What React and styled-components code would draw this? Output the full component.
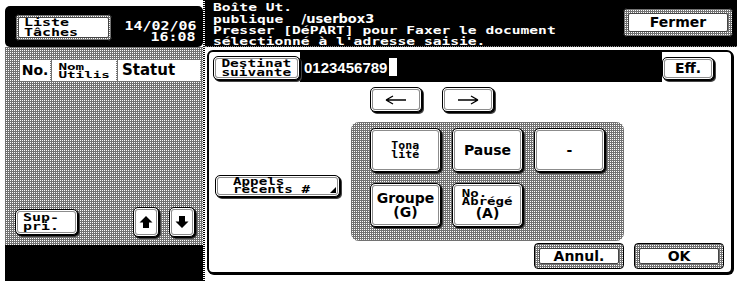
import React from 'react';
import styled, { createGlobalStyle, css } from 'styled-components';

const Global = createGlobalStyle`
  html, body { margin: 0; padding: 0; background: #fff; }
  body { width: 737px; height: 281px; overflow: hidden; }
  * { box-sizing: border-box; }
`;

const mono = css`
  font-family: "DejaVu Sans Mono", "Liberation Mono", monospace;
  font-weight: bold;
`;
const sans = css`
  font-family: "DejaVu Sans", "Liberation Sans", sans-serif;
  font-weight: bold;
`;
const halftone = css`
  background-color: #fff;
  background-image:
    linear-gradient(90deg, #727272 1px, transparent 1px),
    linear-gradient(#727272 1px, transparent 1px);
  background-size: 2px 2px;
`;

const Screen = styled.div`
  width: 737px;
  height: 281px;
  display: flex;
  background: #fff;
  color: #000;
`;

/* ---------- text ---------- */
const MonoText = styled.div`
  ${mono};
  font-size: ${p => p.$size || 11}px;
  line-height: ${p => p.$lh || 10}px;
  text-align: ${p => p.$align || 'left'};
  white-space: pre;
  transform: scaleX(${p => p.$sx || 1});
  transform-origin: ${p => p.$origin || 'center'} center;
`;
const SansText = styled.div`
  ${sans};
  font-size: ${p => p.$size || 14}px;
  line-height: ${p => p.$lh || 15}px;
  text-align: center;
  white-space: pre;
`;

/* ---------- left job list ---------- */
const LeftPanel = styled.div`
  width: 198px;
  margin-left: 5px;
  display: flex;
  flex-direction: column;
`;
const JobBox = styled.div`
  margin-top: 6px;
  height: 41px;
  background: #000;
  border-radius: 5px;
  display: flex;
  align-items: flex-start;
  justify-content: space-between;
  padding: 8px 7px 0 10px;
`;
const FrameOuter = styled.div`
  ${halftone};
  padding: ${p => p.$ring || 3}px;
  border: 1px solid #000;
  border-radius: 4px;
  width: ${p => p.$w}px;
  height: ${p => p.$h}px;
  display: flex;
  color: #000;
`;
const FrameInner = styled.div`
  flex: 1;
  background: #fff;
  border: 1px solid #444;
  border-radius: 2px;
  display: flex;
  align-items: center;
  justify-content: ${p => (p.$left ? 'flex-start' : 'center')};
  padding-left: ${p => p.$pl || 0}px;
`;
const DateTime = styled.div`
  color: #fff;
  margin-top: 7px;
  display: flex;
  flex-direction: column;
  align-items: flex-end;
  gap: 1px;
`;
const JobArea = styled.div`
  ${halftone};
  flex: 1;
  display: flex;
  flex-direction: column;
  padding: 13px 0 8px 0;
`;
const ColumnHeads = styled.div`
  display: flex;
  gap: 2px;
  padding-left: 15px;
`;
const HeadCell = styled.div`
  width: ${p => p.$w}px;
  height: 21px;
  background: #fff;
  display: flex;
  align-items: center;
  justify-content: ${p => (p.$left ? 'flex-start' : 'center')};
  padding-left: ${p => p.$pl || 0}px;
`;
const JobFooter = styled.div`
  margin-top: auto;
  display: flex;
  align-items: center;
  justify-content: space-between;
  padding: 0 8px 0 10px;
`;
const ScrollKeys = styled.div`
  display: flex;
  gap: 10px;
`;
const StatusBar = styled.div`
  height: 36px;
  background: #000;
`;
const Divider = styled.div`
  width: 2px;
  background-image: repeating-linear-gradient(#000 0 1px, #fff 1px 2px);
`;

/* ---------- keys ---------- */
const Key = styled.div`
  position: relative;
  width: ${p => p.$w}px;
  height: ${p => p.$h}px;
  background: #fff;
  color: #000;
  border: 1px solid #000;
  border-radius: 5px;
  box-shadow: inset 0 0 0 1px #fff, inset 0 0 0 2px #8c8c8c, 1px 1px 0 #000, 2px 2px 0 #444;
  display: flex;
  align-items: center;
  justify-content: ${p => (p.$left ? 'flex-start' : 'center')};
  padding-left: ${p => p.$pl || 0}px;
  flex: none;
`;
const CornerMark = styled.span`
  position: absolute;
  right: 3px;
  bottom: 3px;
  width: 0;
  height: 0;
  border-left: 6px solid transparent;
  border-bottom: 6px solid #000;
`;

/* ---------- main area ---------- */
const Main = styled.div`
  flex: 1;
  display: flex;
  flex-direction: column;
`;
const MessageBar = styled.div`
  height: 47px;
  background: #000;
  color: #fff;
  display: flex;
  justify-content: space-between;
  align-items: flex-start;
  padding: 2px 4px 0 8px;
  border-bottom: 1px dotted #888;
`;
const MessageLines = styled.div`
  display: flex;
  flex-direction: column;
`;
const MessageLine = styled.div`
  display: flex;
  align-items: baseline;
  height: 11.4px;
`;
const BoxName = styled.span`
  ${sans};
  font-size: 13px;
  line-height: 11px;
  margin-left: 38px;
`;
const FermerWrap = styled.div`
  margin-top: 6px;
`;
const Dialog = styled.div`
  margin: 3px 4px 7px 2px;
  flex: 1;
  border: 2px solid #000;
  border-radius: 6px;
  box-shadow: 1px 1px 0 #000;
  background: #fff;
  display: flex;
  flex-direction: column;
  overflow: hidden;
`;
const TopRow = styled.div`
  height: 30px;
  display: flex;
  align-items: flex-start;
`;
const DestWrap = styled.div`
  margin: 4px 0 0 4px;
`;
const AddressField = styled.div`
  flex: 1;
  height: 30px;
  background: #000;
  color: #fff;
  display: flex;
  align-items: center;
  padding-left: 4px;
  font-family: "Liberation Sans", Arial, sans-serif;
  font-weight: bold;
  font-size: 15px;
`;
const Cursor = styled.span`
  width: 8px;
  height: 18px;
  background: #fff;
  margin-left: 2px;
`;
const EffWrap = styled.div`
  margin: 5px 17px 0 0;
`;
const ArrowRow = styled.div`
  margin-top: 5px;
  padding-left: 161px;
  display: flex;
  gap: 20px;
`;
const MidRow = styled.div`
  margin-top: 10px;
  display: flex;
  align-items: center;
`;
const AppelsWrap = styled.div`
  margin: 8px 0 0 6px;
`;
const Keypad = styled.div`
  ${halftone};
  margin-left: 11px;
  width: 273px;
  height: 119px;
  border-radius: 8px;
  padding: 6px 0 0 19px;
  display: grid;
  grid-template-columns: repeat(3, 71px);
  grid-auto-rows: 44px;
  gap: 11px;
`;
const BottomRow = styled.div`
  margin-top: 2px;
  display: flex;
  justify-content: flex-end;
  gap: 10px;
  padding-right: 7px;
`;

const LeftArrow = () => (
  <svg width="22" height="10" viewBox="0 0 22 10">
    <path d="M1 5H21M1 5L8 1M1 5L8 9" stroke="#000" strokeWidth="1.4" fill="none" />
  </svg>
);
const RightArrow = () => (
  <svg width="22" height="10" viewBox="0 0 22 10">
    <path d="M1 5H21M21 5L14 1M21 5L14 9" stroke="#000" strokeWidth="1.4" fill="none" />
  </svg>
);
const UpIcon = () => (
  <svg width="14" height="14" viewBox="0 0 14 14">
    <path d="M7 1L13.5 7.5H10V13H4V7.5H0.5Z" fill="#000" />
  </svg>
);
const DownIcon = () => (
  <svg width="14" height="14" viewBox="0 0 14 14">
    <path d="M7 13L13.5 6.5H10V1H4V6.5H0.5Z" fill="#000" />
  </svg>
);

const msg = { $size: 10.5, $lh: 11, $sx: 1.39, $origin: 'left' };

export default function App() {
  return (
    <>
      <Global />
      <Screen>
        <LeftPanel>
          <JobBox>
            <FrameOuter $w={97} $h={27} $ring={2}>
              <FrameInner $left $pl={5}>
                <MonoText $size={11} $lh={9.5} $sx={1.36} $origin="left">{'Liste\nTâches'}</MonoText>
              </FrameInner>
            </FrameOuter>
            <DateTime>
              <MonoText $size={11.5} $lh={10} $sx={1.3} $origin="right">14/02/06</MonoText>
              <MonoText $size={11.5} $lh={10} $sx={1.3} $origin="right">16:08</MonoText>
            </DateTime>
          </JobBox>
          <JobArea>
            <ColumnHeads>
              <HeadCell $w={30}><SansText $size={14}>No.</SansText></HeadCell>
              <HeadCell $w={64}><MonoText $size={9.5} $lh={8} $sx={1.5}>{'Nom\nUtilis'}</MonoText></HeadCell>
              <HeadCell $w={82} $left $pl={4}><SansText $size={15}>Statut</SansText></HeadCell>
            </ColumnHeads>
            <JobFooter>
              <Key $w={63} $h={26} $left $pl={7}>
                <MonoText $size={11} $lh={9} $sx={1.36} $origin="left">{'Sup-\npri.'}</MonoText>
              </Key>
              <ScrollKeys>
                <Key $w={26} $h={30}><UpIcon /></Key>
                <Key $w={26} $h={30}><DownIcon /></Key>
              </ScrollKeys>
            </JobFooter>
          </JobArea>
          <StatusBar />
        </LeftPanel>
        <Divider />
        <Main>
          <MessageBar>
            <MessageLines>
              <MessageLine><MonoText {...msg}>Boîte Ut.</MonoText></MessageLine>
              <MessageLine>
                <MonoText {...msg}>publique</MonoText>
                <BoxName>/userbox3</BoxName>
              </MessageLine>
              <MessageLine><MonoText {...msg}>Presser [DéPART] pour Faxer le document</MonoText></MessageLine>
              <MessageLine><MonoText {...msg}>sélectionné à l'adresse saisie.</MonoText></MessageLine>
            </MessageLines>
            <FermerWrap>
              <FrameOuter $w={110} $h={29} $ring={4}>
                <FrameInner><SansText $size={14}>Fermer</SansText></FrameInner>
              </FrameOuter>
            </FermerWrap>
          </MessageBar>
          <Dialog>
            <TopRow>
              <DestWrap>
                <Key $w={87} $h={24}>
                  <MonoText $size={10.5} $lh={9} $sx={1.38}>{'Destinat\nsuivante'}</MonoText>
                </Key>
              </DestWrap>
              <AddressField>
                0123456789<Cursor />
              </AddressField>
              <EffWrap>
                <Key $w={52} $h={23}><SansText $size={14}>Eff.</SansText></Key>
              </EffWrap>
            </TopRow>
            <ArrowRow>
              <Key $w={52} $h={25}><LeftArrow /></Key>
              <Key $w={52} $h={25}><RightArrow /></Key>
            </ArrowRow>
            <MidRow>
              <AppelsWrap>
                <Key $w={125} $h={22} $left $pl={17}>
                  <MonoText $size={10} $lh={8} $sx={1.42} $origin="left">{'Appels\nrécents #'}</MonoText>
                  <CornerMark />
                </Key>
              </AppelsWrap>
              <Keypad>
                <Key $w={71} $h={44}><MonoText $size={11} $lh={9} $sx={1.05}>{'Tona\nlité'}</MonoText></Key>
                <Key $w={71} $h={44}><SansText $size={14}>Pause</SansText></Key>
                <Key $w={71} $h={44}><SansText $size={14}>-</SansText></Key>
                <Key $w={71} $h={44}><SansText $size={14} $lh={14}>{'Groupe\n(G)'}</SansText></Key>
                <Key $w={71} $h={44}>
                  <div>
                    <MonoText $size={10} $lh={8} $sx={1.4}>{'No.\nAbrégé'}</MonoText>
                    <SansText $size={14} $lh={15}>(A)</SansText>
                  </div>
                </Key>
              </Keypad>
            </MidRow>
            <BottomRow>
              <FrameOuter $w={90} $h={26} $ring={4}>
                <FrameInner><SansText $size={14}>Annul.</SansText></FrameInner>
              </FrameOuter>
              <FrameOuter $w={90} $h={26} $ring={4}>
                <FrameInner><SansText $size={14}>OK</SansText></FrameInner>
              </FrameOuter>
            </BottomRow>
          </Dialog>
        </Main>
      </Screen>
    </>
  );
}
